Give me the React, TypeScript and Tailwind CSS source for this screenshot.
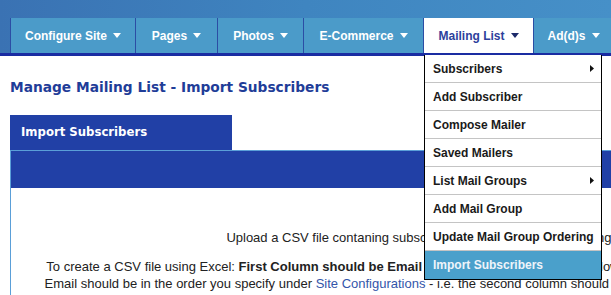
import React from "react";

const tabs = [
  { label: "Configure Site", w: "w-[125px]" },
  { label: "Pages", w: "w-[82px]" },
  { label: "Photos", w: "w-[86px]" },
  { label: "E-Commerce", w: "w-[120px]" },
  { label: "Mailing List", w: "w-[110px]", active: true },
  { label: "Ad(d)s", w: "w-[80px]" },
];

const menu = [
  { label: "Subscribers", sub: true },
  { label: "Add Subscriber" },
  { label: "Compose Mailer" },
  { label: "Saved Mailers" },
  { label: "List Mail Groups", sub: true },
  { label: "Add Mail Group" },
  { label: "Update Mail Group Ordering" },
  { label: "Import Subscribers", current: true },
];

function Caret({ dark }: { dark?: boolean }) {
  return (
    <svg width="8" height="5" viewBox="0 0 8 5" className="ml-[6px] shrink-0">
      <polygon points="0,0 8,0 4,5" fill={dark ? "#1c2a6a" : "#ffffff"} />
    </svg>
  );
}

export default function App() {
  return (
    <div className="relative h-[295px] w-[611px] overflow-hidden bg-white font-['Liberation_Sans',Arial,sans-serif]">
      {/* top navigation */}
      <nav className="flex h-[56px] items-end border-b-[3px] border-[#1a2ca2] bg-gradient-to-r from-[#3a72b3] via-[#3f85c0] to-[#4690c8] pl-[10px]">
        {tabs.map((t) => (
          <div
            key={t.label}
            className={`${t.w} flex h-[35px] shrink-0 items-center justify-center border-l border-[#2c4da4] text-[12px] font-bold ${
              t.active ? "bg-white text-[#2d3f9c]" : "bg-[#4b9bc9] text-white"
            }`}
          >
            {t.label}
            <Caret dark={t.active} />
          </div>
        ))}
      </nav>

      {/* page content */}
      <main className="pl-[10px]">
        <h1 className="mt-[23px] font-['DejaVu_Sans',Verdana,sans-serif] text-[13.75px] font-bold leading-[17px] text-[#1f3d98]">
          Manage Mailing List - Import Subscribers
        </h1>

        <div className="mt-[19px] flex h-[35px] w-[222px] items-center bg-[#2140a6] pl-[11px] font-['DejaVu_Sans',Verdana,sans-serif] text-[11.7px] font-bold text-white">
          Import Subscribers
        </div>

        <section className="w-[840px] border-l border-t border-[#5a9fd8]">
          <div className="h-[37px] bg-[#2140a6]" />
          <div className="pt-[41px] text-center text-[13px] leading-[17px] text-[#222]">
            <p>Upload a CSV file contaning subscribers to import into your mailing list.</p>
            <p className="mt-[12px]">
              To create a CSV file using Excel: <b>First Column should be Email Address</b>, all other columns following
              in the order of your own fields.
              <br />
              Email should be in the order you specify under{" "}
              <span className="text-[#3355aa]">Site Configurations</span> - i.e. the second column should be the
              First Name field of your lists.
              <br />
              the should be like the first field on your Setup screen listing. Then in File "Save As" CSV file, Save
              and Upload it here.
            </p>
          </div>
        </section>
      </main>

      {/* open dropdown */}
      <ul className="absolute left-[424px] top-[55px] w-[178px] border border-t-0 border-black bg-white text-[12px] font-bold text-[#1a1a1a]">
        {menu.map((m, i) => (
          <li
            key={m.label}
            className={`flex h-[28px] items-center justify-between pl-[8px] pr-[7px] ${
              i < menu.length - 1 ? "border-b border-[#c4c4c4]" : ""
            } ${m.current ? "bg-[#4aa0cb] text-[#eef4fa]" : ""}`}
          >
            <span>{m.label}</span>
            {m.sub && (
              <svg width="4" height="7" viewBox="0 0 4 7">
                <polygon points="0,0 4,3.5 0,7" fill="#111" />
              </svg>
            )}
          </li>
        ))}
      </ul>
    </div>
  );
}
